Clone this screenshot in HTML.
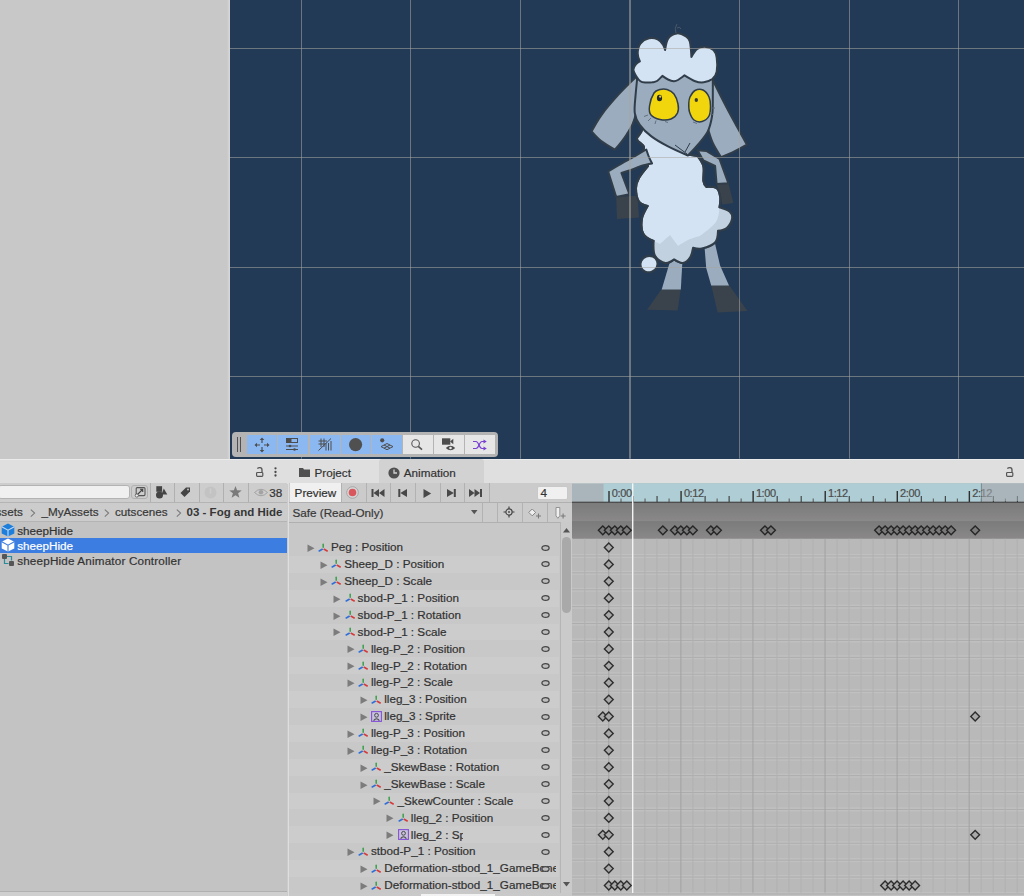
<!DOCTYPE html>
<html><head><meta charset="utf-8"><style>
html,body{margin:0;padding:0;}
body{width:1024px;height:896px;overflow:hidden;position:relative;font-family:"Liberation Sans", sans-serif;background:#cbcbcb;}
div{box-sizing:border-box;}
</style></head><body>
<div style="position:absolute;left:0px;top:0px;width:230px;height:459px;background:#c8c8c8;"></div><div style="position:absolute;left:227px;top:0px;width:3px;height:459px;background:linear-gradient(90deg,#c8c8c8,#dadada);"></div><div style="position:absolute;left:230px;top:0px;width:794px;height:458.7px;background:#223a56;"></div><svg style="position:absolute;left:0;top:0" width="1024" height="458"><path d="M661.7,288.9 L680.8,288.9 L677.6,310.5 L647.1,309.8Z" fill="#3a434c" /><path d="M671.9,255 L682.7,256 L680.8,289.5 L661.7,289.5Z" fill="#9aacbe" /><path d="M711.2,285.1 L729,285.1 L747.4,311.1 L717.6,312.4Z" fill="#3a434c" /><path d="M704.3,244 L714.4,241 L720.1,265.4 L729,285.6 L711.2,285.6 L706.2,268Z" fill="#9aacbe" /><path d="M636.5,76.6 C636.5,76.6 624.0,88.5 618.2,94.9 C612.4,101.3 606.0,108.7 601.6,114.8 C597.2,120.9 591.6,131.4 591.6,131.4 C591.6,131.4 597.7,138.4 601.6,141.4 C605.5,144.4 614.9,149.7 614.9,149.7 C614.9,149.7 623.2,140.0 626.5,134.7 C629.8,129.4 632.9,126.1 634.8,118.1 C636.7,110.1 638.1,86.6 638.1,86.6 C638.1,86.6 636.5,76.6 636.5,76.6Z" fill="#9aacbe" stroke="#313d49" stroke-width="2.0" stroke-linejoin="round" /><path d="M712.8,80.0 C712.8,80.0 720.2,95.2 724.4,103.2 C728.5,111.2 734.0,121.2 737.7,128.1 C741.5,135.0 746.9,144.7 746.9,144.7 C746.9,144.7 738.7,149.2 734.4,151.3 C730.1,153.4 721.1,157.2 721.1,157.2 C721.1,157.2 715.0,147.8 712.8,143.0 C710.6,138.2 707.8,128.1 707.8,128.1 C707.8,128.1 712.8,80.0 712.8,80.0Z" fill="#9aacbe" stroke="#313d49" stroke-width="2.0" stroke-linejoin="round" /><path d="M616.2,197.1 L637.5,195.7 L639,217.6 L617,219.1Z" fill="#3a434c" /><path d="M716.6,184 L728.3,182.5 L733.4,203 L722.4,204.5Z" fill="#3a434c" /><path d="M697.5,150.3 L706.3,151 L719.5,159 L728.3,183.2 L716.6,184 L715.1,166 L703.4,160.5Z" fill="#9aacbe" stroke="#313d49" stroke-width="2.0" stroke-linejoin="round" /><path d="M636.0,120.0 C636.0,120.0 641.8,126.8 642.0,130.0 C642.2,133.2 636.7,136.2 637.0,139.0 C637.3,141.8 643.5,144.3 644.0,147.0 C644.5,149.7 640.0,155.0 640.0,155.0 C640.0,155.0 648.0,166.0 648.0,166.0 C648.0,166.0 641.0,174.3 639.0,178.0 C637.0,181.7 636.0,184.4 636.0,188.3 C636.0,192.2 637.0,198.6 639.0,201.5 C641.0,204.4 647.7,206.0 647.7,206.0 C647.7,206.0 642.6,214.4 641.9,219.0 C641.2,223.6 641.3,230.0 643.3,233.7 C645.2,237.4 653.6,241.0 653.6,241.0 C653.6,241.0 653.0,252.0 655.0,255.7 C657.0,259.4 662.1,262.4 665.3,263.0 C668.5,263.6 674.1,259.4 674.1,259.4 C674.1,259.4 680.2,263.4 682.9,263.0 C685.6,262.6 688.5,259.8 690.2,257.2 C691.9,254.6 693.1,247.7 693.1,247.7 C693.1,247.7 698.3,249.3 702.0,248.4 C705.7,247.5 712.4,245.4 715.1,242.5 C717.8,239.6 718.0,230.8 718.0,230.8 C718.0,230.8 724.5,229.9 726.8,227.9 C729.1,225.9 731.5,221.7 732.0,219.0 C732.5,216.3 731.9,213.7 729.8,211.8 C727.7,209.9 719.5,207.4 719.5,207.4 C719.5,207.4 720.7,200.3 720.2,197.1 C719.7,193.9 718.9,190.0 716.6,188.3 C714.3,186.6 706.3,186.9 706.3,186.9 C706.3,186.9 703.9,184.4 703.4,181.0 C702.9,177.6 704.4,170.6 703.4,166.4 C702.4,162.2 697.5,156.1 697.5,156.1 C697.5,156.1 687.3,154.6 687.3,154.6 C687.3,154.6 660.0,135.0 660.0,135.0 C660.0,135.0 636.0,120.0 636.0,120.0Z" fill="#d3e3f3" stroke="#313d49" stroke-width="2.0" stroke-linejoin="round" /><path d="M653.6,241.0 C653.6,241.0 653.0,252.0 655.0,255.7 C657.0,259.4 662.1,262.4 665.3,263.0 C668.5,263.6 674.1,259.4 674.1,259.4 C674.1,259.4 680.2,263.4 682.9,263.0 C685.6,262.6 688.5,259.8 690.2,257.2 C691.9,254.6 693.1,247.7 693.1,247.7 C693.1,247.7 698.3,249.3 702.0,248.4 C705.7,247.5 712.4,245.4 715.1,242.5 C717.8,239.6 718.0,230.8 718.0,230.8 C718.0,230.8 724.5,229.9 726.8,227.9 C729.1,225.9 731.5,221.7 732.0,219.0 C732.5,216.3 731.9,213.7 729.8,211.8 C727.7,209.9 719.5,207.4 719.5,207.4 C719.5,207.4 719.2,217.2 716.0,222.0 C712.8,226.8 700.0,236.0 700.0,236.0 C700.0,236.0 691.7,238.3 688.0,240.0 C684.3,241.7 678.0,246.0 678.0,246.0 C678.0,246.0 670.0,235.0 670.0,235.0 C670.0,235.0 660.0,244.0 660.0,244.0 C660.0,244.0 653.6,241.0 653.6,241.0Z" fill="#bfcedd" opacity="0.9"/><path d="M636.0,120.0 C636.0,120.0 641.8,126.8 642.0,130.0 C642.2,133.2 636.7,136.2 637.0,139.0 C637.3,141.8 643.5,144.3 644.0,147.0 C644.5,149.7 640.0,155.0 640.0,155.0 C640.0,155.0 648.0,166.0 648.0,166.0 C648.0,166.0 641.0,174.3 639.0,178.0 C637.0,181.7 636.0,184.4 636.0,188.3 C636.0,192.2 637.0,198.6 639.0,201.5 C641.0,204.4 647.7,206.0 647.7,206.0 C647.7,206.0 642.6,214.4 641.9,219.0 C641.2,223.6 641.3,230.0 643.3,233.7 C645.2,237.4 653.6,241.0 653.6,241.0 C653.6,241.0 653.0,252.0 655.0,255.7 C657.0,259.4 662.1,262.4 665.3,263.0 C668.5,263.6 674.1,259.4 674.1,259.4 C674.1,259.4 680.2,263.4 682.9,263.0 C685.6,262.6 688.5,259.8 690.2,257.2 C691.9,254.6 693.1,247.7 693.1,247.7 C693.1,247.7 698.3,249.3 702.0,248.4 C705.7,247.5 712.4,245.4 715.1,242.5 C717.8,239.6 718.0,230.8 718.0,230.8 C718.0,230.8 724.5,229.9 726.8,227.9 C729.1,225.9 731.5,221.7 732.0,219.0 C732.5,216.3 731.9,213.7 729.8,211.8 C727.7,209.9 719.5,207.4 719.5,207.4 C719.5,207.4 720.7,200.3 720.2,197.1 C719.7,193.9 718.9,190.0 716.6,188.3 C714.3,186.6 706.3,186.9 706.3,186.9 C706.3,186.9 703.9,184.4 703.4,181.0 C702.9,177.6 704.4,170.6 703.4,166.4 C702.4,162.2 697.5,156.1 697.5,156.1 C697.5,156.1 687.3,154.6 687.3,154.6 C687.3,154.6 660.0,135.0 660.0,135.0 C660.0,135.0 636.0,120.0 636.0,120.0Z" fill="none" stroke="#313d49" stroke-width="2.0" stroke-linejoin="round" /><path d="M646.3,149.5 C646.3,149.5 648.2,155.3 649.2,157.6 C650.2,159.9 652.1,163.4 652.1,163.4 C652.1,163.4 645.1,164.6 641.9,165.6 C638.7,166.6 636.5,168.1 633.1,169.3 C629.7,170.5 621.4,173.0 621.4,173.0 C621.4,173.0 629.4,194.2 629.4,194.2 C629.4,194.2 616.2,197.1 616.2,197.1 C616.2,197.1 608.2,171.5 608.2,171.5 C608.2,171.5 619.4,164.8 624.3,162.0 C629.2,159.2 633.8,156.7 637.5,154.6 C641.2,152.5 646.3,149.5 646.3,149.5Z" fill="#9aacbe" stroke="#313d49" stroke-width="2.0" stroke-linejoin="round" /><ellipse cx="649" cy="264.1" rx="8.6" ry="8.1" fill="#d3e3f3" stroke="#313d49" stroke-width="2" transform="rotate(-20 649 264.1)"/><path d="M638.1,70.0 C638.1,70.0 636.2,87.7 635.6,94.9 C635.0,102.1 634.1,108.2 634.8,113.2 C635.5,118.2 637.0,120.9 639.8,124.8 C642.6,128.7 646.7,132.8 651.4,136.4 C656.1,140.0 661.9,143.2 668.0,146.4 C674.1,149.6 687.9,155.5 687.9,155.5 C687.9,155.5 694.6,148.7 697.9,144.7 C701.2,140.7 705.4,136.1 707.8,131.4 C710.1,126.7 711.2,121.2 712.0,116.5 C712.8,111.8 712.7,111.0 712.8,103.2 C712.9,95.5 712.8,70.0 712.8,70.0 C712.8,70.0 638.1,70.0 638.1,70.0Z" fill="#9aacbe" stroke="#313d49" stroke-width="2.0" stroke-linejoin="round" /><path d="M675,145 L687,154 M685,152 L690,143" fill="none" stroke="#313d49" stroke-width="1"/><path d="M636.1,75.9 C634.9,73.9 633.4,71.4 633.4,69.4 C633.4,67.4 635.0,65.3 636.1,64.0 C637.2,62.7 639.9,61.4 639.9,61.4 C639.9,61.4 637.6,56.3 637.7,53.3 C637.8,50.3 638.5,46.1 640.4,43.6 C642.3,41.1 646.1,39.0 649.0,38.3 C651.9,37.6 655.3,38.2 657.6,39.3 C659.9,40.4 661.8,42.9 663.0,44.7 C664.2,46.5 665.1,50.1 665.1,50.1 C665.1,50.1 666.3,41.1 668.3,38.3 C670.3,35.5 674.0,33.8 676.9,33.4 C679.8,33.0 683.4,34.8 685.5,36.1 C687.6,37.5 688.8,38.0 689.8,41.5 C690.8,45.0 691.4,57.0 691.4,57.0 C691.4,57.0 694.9,50.7 697.3,49.0 C699.7,47.3 703.2,46.7 705.9,46.9 C708.6,47.1 711.7,48.3 713.5,50.1 C715.3,51.9 716.2,54.0 716.7,57.6 C717.2,61.2 717.4,68.0 716.7,71.6 C716.0,75.2 714.5,77.3 712.4,79.1 C710.2,80.9 706.7,81.9 703.8,82.3 C700.9,82.7 698.4,82.4 695.2,81.2 C692.0,80.0 684.5,75.3 684.5,75.3 C684.5,75.3 679.8,79.0 678.0,80.0 C676.2,81.0 675.4,81.3 673.7,81.2 C672.0,81.1 669.9,80.4 668.0,79.5 C666.1,78.6 662.4,75.9 662.4,75.9 C662.4,75.9 658.7,79.9 657.0,81.0 C655.3,82.1 654.0,82.0 652.2,82.3 C650.4,82.5 648.0,82.7 646.0,82.5 C644.0,82.3 642.0,82.3 640.4,81.2 C638.8,80.1 637.3,77.9 636.1,75.9Z" fill="#d3e3f3" stroke="#313d49" stroke-width="2.0" stroke-linejoin="round" /><path d="M676,33 Q674,28 677,24 M677,28 Q680,26 681,29" fill="none" stroke="#56616c" stroke-width="0.8"/><path d="M654.0,93.0 C655.8,90.2 657.8,90.1 660.0,89.5 C662.2,88.9 664.7,88.8 667.0,89.5 C669.3,90.2 672.2,91.6 674.0,94.0 C675.8,96.4 677.4,100.8 678.0,104.0 C678.6,107.2 678.7,110.5 677.5,113.0 C676.3,115.5 673.9,117.9 671.0,119.0 C668.1,120.1 663.3,120.2 660.0,119.5 C656.7,118.8 652.8,117.2 651.0,115.0 C649.2,112.8 649.0,109.7 649.5,106.0 C650.0,102.3 652.2,95.8 654.0,93.0Z" fill="#f1d60d" stroke="#313d49" stroke-width="1.5" stroke-linejoin="round" /><path d="M690.0,97.0 C691.0,94.9 692.8,91.7 695.0,90.5 C697.2,89.3 700.7,88.9 703.0,90.0 C705.3,91.1 707.8,94.3 709.0,97.0 C710.2,99.7 710.5,102.8 710.5,106.0 C710.5,109.2 710.4,113.4 709.0,116.0 C707.6,118.6 704.5,120.8 702.0,121.5 C699.5,122.2 696.1,121.6 694.0,120.0 C691.9,118.4 690.4,114.8 689.5,112.0 C688.6,109.2 688.7,105.5 688.8,103.0 C688.9,100.5 689.0,99.1 690.0,97.0Z" fill="#f1d60d" stroke="#313d49" stroke-width="1.5" stroke-linejoin="round" /><ellipse cx="659.5" cy="98" rx="2.6" ry="3.3" fill="#20262c"/><ellipse cx="660.2" cy="96.6" rx="1.1" ry="1.2" fill="#f1d60d"/><ellipse cx="696.3" cy="100" rx="1.7" ry="2" fill="#3a3a30"/><path d="M648,115 L644,116.5 M651,118 L648,121 M656,120.5 L655,124 M665,121.5 L668,122.5 M693,122 L697,123.5 M710,112 L713,115 M711,108 L715,108" stroke="#5d6a78" stroke-width="0.9"/></svg><svg style="position:absolute;left:0;top:0" width="1024" height="459"><rect x="301" y="0" width="1" height="458.7" fill="rgba(170,168,160,0.55)"/><rect x="410" y="0" width="1" height="458.7" fill="rgba(170,168,160,0.55)"/><rect x="520" y="0" width="1" height="458.7" fill="rgba(170,168,160,0.55)"/><rect x="739" y="0" width="1" height="458.7" fill="rgba(170,168,160,0.55)"/><rect x="849" y="0" width="1" height="458.7" fill="rgba(170,168,160,0.55)"/><rect x="958" y="0" width="1" height="458.7" fill="rgba(170,168,160,0.55)"/><rect x="629" y="0" width="2" height="458.7" fill="rgba(170,168,160,0.55)"/><rect x="230" y="48" width="794" height="1" fill="rgba(170,168,160,0.55)"/><rect x="230" y="157" width="794" height="1" fill="rgba(170,168,160,0.55)"/><rect x="230" y="267" width="794" height="1" fill="rgba(170,168,160,0.55)"/><rect x="230" y="376" width="794" height="1" fill="rgba(170,168,160,0.55)"/></svg><div style="position:absolute;left:232px;top:432px;width:266px;height:24.5px;background:#b4b4b4;border-radius:4px;"></div><div style="position:absolute;left:237px;top:437px;width:1px;height:15px;background:#505050;"></div><div style="position:absolute;left:240px;top:437px;width:1px;height:15px;background:#505050;"></div><div style="position:absolute;left:247px;top:435px;width:30px;height:19px;background:#8cb8f2;"></div><div style="position:absolute;left:278px;top:435px;width:30px;height:19px;background:#8cb8f2;"></div><div style="position:absolute;left:310px;top:435px;width:30px;height:19px;background:#8cb8f2;"></div><div style="position:absolute;left:341px;top:435px;width:30px;height:19px;background:#8cb8f2;"></div><div style="position:absolute;left:372px;top:435px;width:30px;height:19px;background:#8cb8f2;"></div><div style="position:absolute;left:403px;top:435px;width:30px;height:19px;background:#e6e6e6;"></div><div style="position:absolute;left:434px;top:435px;width:30px;height:19px;background:#e6e6e6;"></div><div style="position:absolute;left:465px;top:435px;width:30px;height:19px;background:#e6e6e6;"></div><!--TBICONS--><div style="position:absolute;left:0px;top:458.7px;width:1024px;height:25.3px;background:#dfdfdf;"></div><div style="position:absolute;left:0px;top:458.7px;width:1024px;height:1.3px;background:#ebebeb;"></div><div style="position:absolute;left:379px;top:459px;width:105px;height:25px;background:#d2d2d2;border-radius:3px 3px 0 0;"></div><div style="position:absolute;left:0px;top:484px;width:287px;height:412px;background:#c3c3c3;"></div><div style="position:absolute;left:0px;top:482.5px;width:287px;height:19.5px;background:#cdcdcd;"></div><div style="position:absolute;left:0px;top:502px;width:287px;height:20px;background:#cccccc;"></div><div style="position:absolute;left:0px;top:521px;width:287px;height:1px;background:#b4b4b4;"></div><div style="position:absolute;left:0px;top:537.5px;width:287px;height:15px;background:#3b7de0;"></div><div style="position:absolute;left:-2px;top:485.4px;width:132px;height:13.6px;background:#f0f0f0;border:1px solid #b3b3b3;box-sizing:border-box;border-radius:3px;"></div><div style="position:absolute;left:130.5px;top:485.4px;width:17px;height:13.6px;background:#cdcdcd;border:1px solid #b0b0b0;box-sizing:border-box;border-radius:3px;"></div><div style="position:absolute;left:150px;top:482.5px;width:1px;height:19.5px;background:#b0b0b0;"></div><div style="position:absolute;left:174px;top:482.5px;width:1px;height:19.5px;background:#b0b0b0;"></div><div style="position:absolute;left:199px;top:482.5px;width:1px;height:19.5px;background:#b0b0b0;"></div><div style="position:absolute;left:223px;top:482.5px;width:1px;height:19.5px;background:#b0b0b0;"></div><div style="position:absolute;left:248px;top:482.5px;width:1px;height:19.5px;background:#b0b0b0;"></div><div style="position:absolute;left:0px;top:501.9px;width:287px;height:1px;background:#b4b4b4;"></div><div style="position:absolute;left:287.6px;top:484px;width:1.8px;height:412px;background:#dedede;"></div><div style="position:absolute;left:0px;top:891px;width:287px;height:1px;background:#b0b0b0;"></div><div style="position:absolute;left:0px;top:892px;width:287px;height:4px;background:#cfcfcf;"></div><div style="position:absolute;left:289px;top:484px;width:735px;height:412px;background:#c9c9c9;"></div><div style="position:absolute;left:289px;top:483px;width:283px;height:19px;background:#cbcbcb;"></div><div style="position:absolute;left:289.5px;top:483px;width:51.5px;height:19px;background:#f0f0f0;"></div><div style="position:absolute;left:341px;top:483px;width:1px;height:19px;background:#b2b2b2;"></div><div style="position:absolute;left:366px;top:483px;width:1px;height:19px;background:#b2b2b2;"></div><div style="position:absolute;left:390px;top:483px;width:1px;height:19px;background:#b2b2b2;"></div><div style="position:absolute;left:415px;top:483px;width:1px;height:19px;background:#b2b2b2;"></div><div style="position:absolute;left:440px;top:483px;width:1px;height:19px;background:#b2b2b2;"></div><div style="position:absolute;left:464px;top:483px;width:1px;height:19px;background:#b2b2b2;"></div><div style="position:absolute;left:489px;top:483px;width:1px;height:19px;background:#b2b2b2;"></div><div style="position:absolute;left:537px;top:486px;width:31px;height:14px;background:#f0f0f0;border-radius:2px;border:1px solid #c8c8c8;box-sizing:border-box;"></div><div style="position:absolute;left:289px;top:502px;width:283px;height:20px;background:#cbcbcb;"></div><div style="position:absolute;left:481.7px;top:502px;width:1px;height:20px;background:#b2b2b2;"></div><div style="position:absolute;left:497.4px;top:502px;width:1px;height:20px;background:#b2b2b2;"></div><div style="position:absolute;left:522.4px;top:502px;width:1px;height:20px;background:#b2b2b2;"></div><div style="position:absolute;left:546.6px;top:502px;width:1px;height:20px;background:#b2b2b2;"></div><div style="position:absolute;left:289px;top:522px;width:272px;height:371px;background:#c8c8c8;"></div><div style="position:absolute;left:561px;top:522px;width:11px;height:371px;background:#c4c4c4;"></div><div style="position:absolute;left:289px;top:501.6px;width:283px;height:1.2px;background:#b0b0b0;"></div><div style="position:absolute;left:289px;top:521.5px;width:283px;height:1.2px;background:#b0b0b0;"></div><div style="position:absolute;left:572px;top:484px;width:452px;height:18px;background:#a9b5ba;"></div><div style="position:absolute;left:604px;top:484px;width:377px;height:18px;background:#b0d3db;"></div><div style="position:absolute;left:572px;top:501px;width:452px;height:1px;background:#3a3a3a;"></div><div style="position:absolute;left:572px;top:502px;width:452px;height:20px;background:#848484;"></div><div style="position:absolute;left:572px;top:522px;width:452px;height:17px;background:#7d7d7d;"></div><div style="position:absolute;left:572px;top:539px;width:452px;height:354px;background:#bababa;"></div><!--TIMELINE--><div style="position:absolute;left:421px;top:893.5px;width:74px;height:2.5px;background:#f2f2f2;"></div><svg style="position:absolute;left:254px;top:437px;overflow:visible" width="16" height="16" viewBox="0 0 16 16"><g fill="none" stroke="#4d4d4d" stroke-width="1.2"><path d="M8,2 V6 M8,10 V14 M2,8 H6 M10,8 H14"/></g><g fill="#4d4d4d"><path d="M8,0.5 L10.3,3 H5.7Z M8,15.5 L10.3,13 H5.7Z M0.5,8 L3,5.7 V10.3Z M15.5,8 L13,5.7 V10.3Z"/></g></svg><svg style="position:absolute;left:286px;top:438px;overflow:visible" width="14" height="13" viewBox="0 0 14 13"><rect x="0.5" y="0.5" width="11" height="4" fill="none" stroke="#4d4d4d" stroke-width="1"/><rect x="0.5" y="0.5" width="5" height="4" fill="#4d4d4d"/><path d="M0,8 H12 M0,11.5 H12" stroke="#4d4d4d" stroke-width="1"/><circle cx="4" cy="8" r="1.3" fill="#4d4d4d"/><circle cx="8.5" cy="11.5" r="1.3" fill="#4d4d4d"/></svg><svg style="position:absolute;left:317.5px;top:438px;overflow:visible" width="14" height="13" viewBox="0 0 14 13"><g stroke="#4d4d4d" stroke-width="1"><path d="M0.5,3 H9 M0.5,6 H9 M3,0.5 V9 M6,0.5 V9"/><path d="M0.5,12.5 L13,0.5"/><path d="M8,7 V12.5 M10.5,5 V12.5 M13,3 V12.5"/></g></svg><svg style="position:absolute;left:348.9px;top:437.9px;overflow:visible" width="13.2" height="13.2" viewBox="0 0 13.2 13.2"><circle cx="6.6" cy="6.6" r="6.6" fill="#505050"/></svg><svg style="position:absolute;left:380px;top:438px;overflow:visible" width="14" height="12" viewBox="0 0 14 12"><circle cx="2.2" cy="2.3" r="2.1" fill="#4d4d4d"/><path d="M7,5.5 L13,8.6 L7,11.7 L1,8.6Z M4,7 L10,10.2 M10,7 L4,10.2" fill="none" stroke="#4d4d4d" stroke-width="1"/></svg><svg style="position:absolute;left:411px;top:439px;overflow:visible" width="13" height="12" viewBox="0 0 13 12"><circle cx="4.6" cy="4.5" r="3.8" fill="none" stroke="#555" stroke-width="1.1"/><path d="M7.3,7.3 L11,10.6" stroke="#555" stroke-width="1.6"/></svg><svg style="position:absolute;left:442px;top:438px;overflow:visible" width="14" height="13" viewBox="0 0 14 13"><rect x="0" y="0.3" width="8.3" height="6.4" fill="#4d4d4d"/><path d="M8,3.5 L11.3,0.8 V6.2Z" fill="#4d4d4d"/><path d="M3.8,10 Q8.5,5.5 13.2,10 Q8.5,14.5 3.8,10Z" fill="#4d4d4d"/><circle cx="8.5" cy="10" r="1.3" fill="#e6e6e6"/></svg><svg style="position:absolute;left:472.5px;top:440px;overflow:visible" width="14" height="10" viewBox="0 0 14 10"><g fill="none" stroke="#7a40d2" stroke-width="1.2"><path d="M0,1.5 H3 C6,1.5 6,8.5 9,8.5 H11.5"/><path d="M0,8.5 H3 C6,8.5 6,1.5 9,1.5 H11.5"/></g><path d="M10.5,-0.5 L13.8,1.5 L10.5,3.5Z M10.5,6.5 L13.8,8.5 L10.5,10.5Z" fill="#7a40d2"/></svg><svg style="position:absolute;left:256px;top:467px;overflow:visible" width="9" height="11" viewBox="0 0 9 11"><path d="M1.3,1.6 Q2.5,0.6 4,0.7 Q6,0.8 6,3 V5" fill="none" stroke="#555" stroke-width="1.3"/><rect x="0.6" y="5.5" width="6.2" height="3.9" rx="0.8" fill="none" stroke="#555" stroke-width="1.2"/></svg><svg style="position:absolute;left:274px;top:467px;overflow:visible" width="4" height="12" viewBox="0 0 4 12"><circle cx="1.5" cy="1.3" r="1.15" fill="#4a4a4a"/><circle cx="1.5" cy="5" r="1.15" fill="#4a4a4a"/><circle cx="1.5" cy="8.5" r="1.15" fill="#4a4a4a"/></svg><svg style="position:absolute;left:299px;top:468px;overflow:visible" width="11" height="9" viewBox="0 0 11 9"><path d="M0,0 H4 L5,1.5 H11 V9 H0Z" fill="#505050"/></svg><div style="position:absolute;left:314.5px;top:466.00px;font-size:11.7px;line-height:13px;color:#323232;font-weight:normal;white-space:nowrap;-webkit-text-stroke:0.2px #323232;">Project</div><svg style="position:absolute;left:388px;top:467px;overflow:visible" width="12" height="12" viewBox="0 0 12 12"><circle cx="6" cy="6" r="5.6" fill="#505050"/><path d="M6,2.5 V6 H9" fill="none" stroke="#d2d2d2" stroke-width="1.3"/></svg><div style="position:absolute;left:403.8px;top:466.00px;font-size:11.7px;line-height:13px;color:#323232;font-weight:normal;white-space:nowrap;-webkit-text-stroke:0.2px #323232;">Animation</div><svg style="position:absolute;left:1005.5px;top:467px;overflow:visible" width="9" height="11" viewBox="0 0 9 11"><path d="M1.3,1.6 Q2.5,0.6 4,0.7 Q6,0.8 6,3 V5" fill="none" stroke="#555" stroke-width="1.3"/><rect x="0.6" y="5.5" width="6.2" height="3.9" rx="0.8" fill="none" stroke="#555" stroke-width="1.2"/></svg><svg style="position:absolute;left:134.5px;top:486.8px;overflow:visible" width="11" height="10" viewBox="0 0 11 10"><rect x="1.2" y="0.6" width="8.8" height="8" rx="1" fill="none" stroke="#555" stroke-width="1.1"/><path d="M2.5,7.5 L7.5,2.5 M5,2.3 H7.7 V5" fill="none" stroke="#444" stroke-width="1.1"/><circle cx="1.8" cy="8.5" r="1.6" fill="#f2f2f2" stroke="#555" stroke-width="0.8"/></svg><svg style="position:absolute;left:156px;top:485.5px;overflow:visible" width="12" height="13" viewBox="0 0 12 13"><rect x="0.3" y="0.2" width="5.8" height="5.6" fill="#444"/><circle cx="3.5" cy="9" r="3.5" fill="#444"/><path d="M7.8,2.6 L11.3,8.6 H5.5Z" fill="#444"/></svg><svg style="position:absolute;left:180px;top:487px;overflow:visible" width="11" height="10" viewBox="0 0 11 10"><path d="M0.5,6 L6,0.5 H10 V4.5 L4.5,10Z" fill="#444"/><circle cx="8" cy="2.5" r="0.9" fill="#cbcbcb"/></svg><svg style="position:absolute;left:204px;top:486px;overflow:visible" width="13" height="13" viewBox="0 0 13 13"><circle cx="6.5" cy="6.5" r="6" fill="#c3c3c3"/><rect x="5.7" y="2.5" width="1.6" height="5" fill="#cdcdcd"/></svg><svg style="position:absolute;left:228.5px;top:486px;overflow:visible" width="13" height="12" viewBox="0 0 13 12"><path d="M6.5,0 L8.1,4.3 L12.7,4.5 L9.1,7.3 L10.4,11.8 L6.5,9.2 L2.6,11.8 L3.9,7.3 L0.3,4.5 L4.9,4.3Z" fill="#7a7a7a"/></svg><svg style="position:absolute;left:253.5px;top:487.5px;overflow:visible" width="14" height="9" viewBox="0 0 14 9"><path d="M0.5,4.5 Q7,-2 13.5,4.5 Q7,11 0.5,4.5Z" fill="none" stroke="#a3a3a3" stroke-width="1"/><circle cx="7" cy="4.2" r="2.3" fill="#a3a3a3"/></svg><div style="position:absolute;left:269.2px;top:486.40px;font-size:11.7px;line-height:13px;color:#323232;font-weight:normal;white-space:nowrap;-webkit-text-stroke:0.2px #323232;">38</div><div style="position:absolute;left:-4.5px;top:505.40px;font-size:11.7px;line-height:13px;color:#383838;font-weight:normal;white-space:nowrap;-webkit-text-stroke:0.2px #383838;">ssets</div><svg style="position:absolute;left:30.2px;top:508.5px;overflow:visible" width="6" height="9" viewBox="0 0 6 9"><path d="M0.8,0.6 L4.6,4.1 L0.8,7.6" fill="none" stroke="#7a7a7a" stroke-width="1.1"/></svg><div style="position:absolute;left:41.4px;top:505.40px;font-size:11.7px;line-height:13px;color:#383838;font-weight:normal;white-space:nowrap;-webkit-text-stroke:0.2px #383838;">_MyAssets</div><svg style="position:absolute;left:104px;top:508.5px;overflow:visible" width="6" height="9" viewBox="0 0 6 9"><path d="M0.8,0.6 L4.6,4.1 L0.8,7.6" fill="none" stroke="#7a7a7a" stroke-width="1.1"/></svg><div style="position:absolute;left:115px;top:505.40px;font-size:11.7px;line-height:13px;color:#383838;font-weight:normal;white-space:nowrap;-webkit-text-stroke:0.2px #383838;">cutscenes</div><svg style="position:absolute;left:175.6px;top:508.5px;overflow:visible" width="6" height="9" viewBox="0 0 6 9"><path d="M0.8,0.6 L4.6,4.1 L0.8,7.6" fill="none" stroke="#7a7a7a" stroke-width="1.1"/></svg><div style="position:absolute;left:186.6px;top:505.58px;font-size:11.5px;line-height:13px;color:#363636;font-weight:bold;white-space:nowrap;-webkit-text-stroke:0px #363636;">03 - Fog and Hide</div><svg style="position:absolute;left:0.5px;top:522.5px;overflow:visible" width="14" height="14" viewBox="0 0 14 14"><path d="M7,0.5 L13.3,3.8 V10.4 L7,13.6 L0.7,10.4 V3.8Z" fill="#1d7fdb"/><path d="M0.7,3.8 L7,7.2 L13.3,3.8 M7,7.2 V13.6" fill="none" stroke="#c9d9ec" stroke-width="1.1"/></svg><div style="position:absolute;left:17.2px;top:523.90px;font-size:11.7px;line-height:13px;color:#323232;font-weight:normal;white-space:nowrap;-webkit-text-stroke:0.2px #323232;">sheepHide</div><svg style="position:absolute;left:0.5px;top:538px;overflow:visible" width="14" height="14" viewBox="0 0 14 14"><path d="M7,0.5 L13.3,3.8 V10.4 L7,13.6 L0.7,10.4 V3.8Z" fill="#ffffff"/><path d="M0.7,3.8 L7,7.2 L13.3,3.8 M7,7.2 V13.6" fill="none" stroke="#3b7de0" stroke-width="1.1"/></svg><div style="position:absolute;left:17.2px;top:538.90px;font-size:11.7px;line-height:13px;color:#ffffff;font-weight:normal;white-space:nowrap;-webkit-text-stroke:0.2px #ffffff;">sheepHide</div><svg style="position:absolute;left:2px;top:553.5px;overflow:visible" width="12" height="12" viewBox="0 0 12 12"><rect x="0" y="0" width="5" height="5" rx="1" fill="#555"/><rect x="7" y="7" width="5" height="5" rx="1" fill="#555"/><path d="M5,2.5 H9.5 V6.5 M2.5,5 V9.5 H6.5" fill="none" stroke="#2a8c9a" stroke-width="1.2"/></svg><div style="position:absolute;left:17.2px;top:554.20px;font-size:11.7px;line-height:13px;color:#323232;font-weight:normal;white-space:nowrap;-webkit-text-stroke:0.2px #323232;letter-spacing:0.17px;">sheepHide Animator Controller</div><div style="position:absolute;left:294.6px;top:486.40px;font-size:11.7px;line-height:13px;color:#323232;font-weight:normal;white-space:nowrap;-webkit-text-stroke:0.2px #323232;">Preview</div><svg style="position:absolute;left:345.5px;top:486px;overflow:visible" width="13" height="13" viewBox="0 0 13 13"><circle cx="6.5" cy="6.5" r="5.8" fill="#d6d6d6" stroke="#a6a6a6" stroke-width="1"/><circle cx="6.5" cy="6.5" r="3.8" fill="#d8575c"/></svg><svg style="position:absolute;left:371px;top:489px;overflow:visible" width="15" height="8" viewBox="0 0 15 8"><rect x="0.5" y="0" width="2" height="8" fill="#484848"/><path d="M2.5,4 L8,0 V8Z M8,4 L13.5,0 V8Z" fill="#484848"/></svg><svg style="position:absolute;left:398px;top:489px;overflow:visible" width="10" height="8" viewBox="0 0 10 8"><rect x="0.3" y="0" width="2" height="8" fill="#484848"/><path d="M2.3,4 L9,0 V8Z" fill="#484848"/></svg><svg style="position:absolute;left:423px;top:488.5px;overflow:visible" width="9" height="9" viewBox="0 0 9 9"><path d="M0.5,0 L8.2,4.5 L0.5,9Z" fill="#484848"/></svg><svg style="position:absolute;left:447px;top:489px;overflow:visible" width="10" height="8" viewBox="0 0 10 8"><path d="M0,0 L6.8,4 L0,8Z" fill="#484848"/><rect x="6.8" y="0" width="2" height="8" fill="#484848"/></svg><svg style="position:absolute;left:469px;top:489px;overflow:visible" width="14" height="8" viewBox="0 0 14 8"><path d="M0,0 L5.5,4 L0,8Z M5.5,0 L11,4 L5.5,8Z" fill="#484848"/><rect x="11" y="0" width="2" height="8" fill="#484848"/></svg><div style="position:absolute;left:540.5px;top:486.40px;font-size:11.7px;line-height:13px;color:#333;font-weight:normal;white-space:nowrap;-webkit-text-stroke:0.2px #333;">4</div><div style="position:absolute;left:292.5px;top:506.40px;font-size:11.7px;line-height:13px;color:#383838;font-weight:normal;white-space:nowrap;-webkit-text-stroke:0.2px #383838;">Safe (Read-Only)</div><svg style="position:absolute;left:471px;top:510.3px;overflow:visible" width="7" height="5" viewBox="0 0 7 5"><path d="M0,0 H6.5 L3.25,4.2Z" fill="#555"/></svg><svg style="position:absolute;left:503.2px;top:506px;overflow:visible" width="12" height="12" viewBox="0 0 12 12"><circle cx="6" cy="6" r="3.1" fill="none" stroke="#454545" stroke-width="1.2"/><circle cx="6" cy="6" r="0.9" fill="#454545"/><path d="M6,0.5 V2.9 M6,9.1 V11.5 M0.5,6 H2.9 M9.1,6 H11.5" stroke="#454545" stroke-width="1.2"/></svg><svg style="position:absolute;left:527.5px;top:507.5px;overflow:visible" width="14" height="11" viewBox="0 0 14 11"><path d="M4.2,1 L7.6,4.4 L4.2,7.8 L0.8,4.4Z" fill="#efefef" stroke="#7a7a7a" stroke-width="0.9"/><path d="M8,8 H13 M10.5,5.5 V10.5" stroke="#7a7a7a" stroke-width="1.1"/></svg><svg style="position:absolute;left:554.5px;top:506.5px;overflow:visible" width="14" height="13" viewBox="0 0 14 13"><path d="M1,0.5 H4.8 V8.8 L2.9,11.3 L1,8.8Z" fill="#efefef" stroke="#8a8a8a" stroke-width="0.9"/><path d="M5.6,9 H10.6 M8.1,6.5 V11.5" stroke="#7a7a7a" stroke-width="1.1"/></svg><svg style="position:absolute;left:306.6px;top:543.9px;overflow:visible" width="9" height="9" viewBox="0 0 9 9"><path d="M0.5,0.5 L7.5,4.3 L0.5,8.1Z" fill="#7c7c7c"/></svg><svg style="position:absolute;left:317.9px;top:542.5px;overflow:visible" width="11" height="10" viewBox="0 0 11 10"><path d="M5.2,4.2 V1.2" stroke="#3aa04a" stroke-width="1.5" stroke-linecap="round"/><path d="M4.2,6.3 L1.2,7.9" stroke="#2f6fd8" stroke-width="1.7" stroke-linecap="round"/><path d="M6.2,6.3 L9.2,7.9" stroke="#d63a3a" stroke-width="1.7" stroke-linecap="round"/></svg><div style="position:absolute;left:331.0px;top:540.20px;font-size:11.7px;line-height:13px;color:#323232;font-weight:normal;white-space:nowrap;-webkit-text-stroke:0.2px #323232;">Peg : Position</div><svg style="position:absolute;left:540.5px;top:544.5px;overflow:visible" width="9" height="6" viewBox="0 0 9 6"><ellipse cx="4.5" cy="3" rx="3.6" ry="2.4" fill="#bdbdbd" stroke="#474747" stroke-width="1.3"/></svg><div style="position:absolute;left:289px;top:555.95px;width:270px;height:16.9px;background:#cccccc"></div><svg style="position:absolute;left:319.9px;top:560.8px;overflow:visible" width="9" height="9" viewBox="0 0 9 9"><path d="M0.5,0.5 L7.5,4.3 L0.5,8.1Z" fill="#7c7c7c"/></svg><svg style="position:absolute;left:331.2px;top:559.4px;overflow:visible" width="11" height="10" viewBox="0 0 11 10"><path d="M5.2,4.2 V1.2" stroke="#3aa04a" stroke-width="1.5" stroke-linecap="round"/><path d="M4.2,6.3 L1.2,7.9" stroke="#2f6fd8" stroke-width="1.7" stroke-linecap="round"/><path d="M6.2,6.3 L9.2,7.9" stroke="#d63a3a" stroke-width="1.7" stroke-linecap="round"/></svg><div style="position:absolute;left:344.3px;top:557.10px;font-size:11.7px;line-height:13px;color:#323232;font-weight:normal;white-space:nowrap;-webkit-text-stroke:0.2px #323232;">Sheep_D : Position</div><svg style="position:absolute;left:540.5px;top:561.4px;overflow:visible" width="9" height="6" viewBox="0 0 9 6"><ellipse cx="4.5" cy="3" rx="3.6" ry="2.4" fill="#bdbdbd" stroke="#474747" stroke-width="1.3"/></svg><svg style="position:absolute;left:319.9px;top:577.7px;overflow:visible" width="9" height="9" viewBox="0 0 9 9"><path d="M0.5,0.5 L7.5,4.3 L0.5,8.1Z" fill="#7c7c7c"/></svg><svg style="position:absolute;left:331.2px;top:576.3px;overflow:visible" width="11" height="10" viewBox="0 0 11 10"><path d="M5.2,4.2 V1.2" stroke="#3aa04a" stroke-width="1.5" stroke-linecap="round"/><path d="M4.2,6.3 L1.2,7.9" stroke="#2f6fd8" stroke-width="1.7" stroke-linecap="round"/><path d="M6.2,6.3 L9.2,7.9" stroke="#d63a3a" stroke-width="1.7" stroke-linecap="round"/></svg><div style="position:absolute;left:344.3px;top:574.00px;font-size:11.7px;line-height:13px;color:#323232;font-weight:normal;white-space:nowrap;-webkit-text-stroke:0.2px #323232;">Sheep_D : Scale</div><svg style="position:absolute;left:540.5px;top:578.3px;overflow:visible" width="9" height="6" viewBox="0 0 9 6"><ellipse cx="4.5" cy="3" rx="3.6" ry="2.4" fill="#bdbdbd" stroke="#474747" stroke-width="1.3"/></svg><div style="position:absolute;left:289px;top:589.75px;width:270px;height:16.9px;background:#cccccc"></div><svg style="position:absolute;left:333.2px;top:594.6px;overflow:visible" width="9" height="9" viewBox="0 0 9 9"><path d="M0.5,0.5 L7.5,4.3 L0.5,8.1Z" fill="#7c7c7c"/></svg><svg style="position:absolute;left:344.5px;top:593.2px;overflow:visible" width="11" height="10" viewBox="0 0 11 10"><path d="M5.2,4.2 V1.2" stroke="#3aa04a" stroke-width="1.5" stroke-linecap="round"/><path d="M4.2,6.3 L1.2,7.9" stroke="#2f6fd8" stroke-width="1.7" stroke-linecap="round"/><path d="M6.2,6.3 L9.2,7.9" stroke="#d63a3a" stroke-width="1.7" stroke-linecap="round"/></svg><div style="position:absolute;left:357.6px;top:590.90px;font-size:11.7px;line-height:13px;color:#323232;font-weight:normal;white-space:nowrap;-webkit-text-stroke:0.2px #323232;">sbod-P_1 : Position</div><svg style="position:absolute;left:540.5px;top:595.2px;overflow:visible" width="9" height="6" viewBox="0 0 9 6"><ellipse cx="4.5" cy="3" rx="3.6" ry="2.4" fill="#bdbdbd" stroke="#474747" stroke-width="1.3"/></svg><svg style="position:absolute;left:333.2px;top:611.5px;overflow:visible" width="9" height="9" viewBox="0 0 9 9"><path d="M0.5,0.5 L7.5,4.3 L0.5,8.1Z" fill="#7c7c7c"/></svg><svg style="position:absolute;left:344.5px;top:610.1px;overflow:visible" width="11" height="10" viewBox="0 0 11 10"><path d="M5.2,4.2 V1.2" stroke="#3aa04a" stroke-width="1.5" stroke-linecap="round"/><path d="M4.2,6.3 L1.2,7.9" stroke="#2f6fd8" stroke-width="1.7" stroke-linecap="round"/><path d="M6.2,6.3 L9.2,7.9" stroke="#d63a3a" stroke-width="1.7" stroke-linecap="round"/></svg><div style="position:absolute;left:357.6px;top:607.80px;font-size:11.7px;line-height:13px;color:#323232;font-weight:normal;white-space:nowrap;-webkit-text-stroke:0.2px #323232;">sbod-P_1 : Rotation</div><svg style="position:absolute;left:540.5px;top:612.1px;overflow:visible" width="9" height="6" viewBox="0 0 9 6"><ellipse cx="4.5" cy="3" rx="3.6" ry="2.4" fill="#bdbdbd" stroke="#474747" stroke-width="1.3"/></svg><div style="position:absolute;left:289px;top:623.55px;width:270px;height:16.9px;background:#cccccc"></div><svg style="position:absolute;left:333.2px;top:628.4px;overflow:visible" width="9" height="9" viewBox="0 0 9 9"><path d="M0.5,0.5 L7.5,4.3 L0.5,8.1Z" fill="#7c7c7c"/></svg><svg style="position:absolute;left:344.5px;top:627.0px;overflow:visible" width="11" height="10" viewBox="0 0 11 10"><path d="M5.2,4.2 V1.2" stroke="#3aa04a" stroke-width="1.5" stroke-linecap="round"/><path d="M4.2,6.3 L1.2,7.9" stroke="#2f6fd8" stroke-width="1.7" stroke-linecap="round"/><path d="M6.2,6.3 L9.2,7.9" stroke="#d63a3a" stroke-width="1.7" stroke-linecap="round"/></svg><div style="position:absolute;left:357.6px;top:624.70px;font-size:11.7px;line-height:13px;color:#323232;font-weight:normal;white-space:nowrap;-webkit-text-stroke:0.2px #323232;">sbod-P_1 : Scale</div><svg style="position:absolute;left:540.5px;top:629.0px;overflow:visible" width="9" height="6" viewBox="0 0 9 6"><ellipse cx="4.5" cy="3" rx="3.6" ry="2.4" fill="#bdbdbd" stroke="#474747" stroke-width="1.3"/></svg><svg style="position:absolute;left:346.5px;top:645.3px;overflow:visible" width="9" height="9" viewBox="0 0 9 9"><path d="M0.5,0.5 L7.5,4.3 L0.5,8.1Z" fill="#7c7c7c"/></svg><svg style="position:absolute;left:357.8px;top:643.9px;overflow:visible" width="11" height="10" viewBox="0 0 11 10"><path d="M5.2,4.2 V1.2" stroke="#3aa04a" stroke-width="1.5" stroke-linecap="round"/><path d="M4.2,6.3 L1.2,7.9" stroke="#2f6fd8" stroke-width="1.7" stroke-linecap="round"/><path d="M6.2,6.3 L9.2,7.9" stroke="#d63a3a" stroke-width="1.7" stroke-linecap="round"/></svg><div style="position:absolute;left:370.9px;top:641.60px;font-size:11.7px;line-height:13px;color:#323232;font-weight:normal;white-space:nowrap;-webkit-text-stroke:0.2px #323232;">lleg-P_2 : Position</div><svg style="position:absolute;left:540.5px;top:645.9px;overflow:visible" width="9" height="6" viewBox="0 0 9 6"><ellipse cx="4.5" cy="3" rx="3.6" ry="2.4" fill="#bdbdbd" stroke="#474747" stroke-width="1.3"/></svg><div style="position:absolute;left:289px;top:657.35px;width:270px;height:16.9px;background:#cccccc"></div><svg style="position:absolute;left:346.5px;top:662.2px;overflow:visible" width="9" height="9" viewBox="0 0 9 9"><path d="M0.5,0.5 L7.5,4.3 L0.5,8.1Z" fill="#7c7c7c"/></svg><svg style="position:absolute;left:357.8px;top:660.8px;overflow:visible" width="11" height="10" viewBox="0 0 11 10"><path d="M5.2,4.2 V1.2" stroke="#3aa04a" stroke-width="1.5" stroke-linecap="round"/><path d="M4.2,6.3 L1.2,7.9" stroke="#2f6fd8" stroke-width="1.7" stroke-linecap="round"/><path d="M6.2,6.3 L9.2,7.9" stroke="#d63a3a" stroke-width="1.7" stroke-linecap="round"/></svg><div style="position:absolute;left:370.9px;top:658.50px;font-size:11.7px;line-height:13px;color:#323232;font-weight:normal;white-space:nowrap;-webkit-text-stroke:0.2px #323232;">lleg-P_2 : Rotation</div><svg style="position:absolute;left:540.5px;top:662.8px;overflow:visible" width="9" height="6" viewBox="0 0 9 6"><ellipse cx="4.5" cy="3" rx="3.6" ry="2.4" fill="#bdbdbd" stroke="#474747" stroke-width="1.3"/></svg><svg style="position:absolute;left:346.5px;top:679.1px;overflow:visible" width="9" height="9" viewBox="0 0 9 9"><path d="M0.5,0.5 L7.5,4.3 L0.5,8.1Z" fill="#7c7c7c"/></svg><svg style="position:absolute;left:357.8px;top:677.7px;overflow:visible" width="11" height="10" viewBox="0 0 11 10"><path d="M5.2,4.2 V1.2" stroke="#3aa04a" stroke-width="1.5" stroke-linecap="round"/><path d="M4.2,6.3 L1.2,7.9" stroke="#2f6fd8" stroke-width="1.7" stroke-linecap="round"/><path d="M6.2,6.3 L9.2,7.9" stroke="#d63a3a" stroke-width="1.7" stroke-linecap="round"/></svg><div style="position:absolute;left:370.9px;top:675.40px;font-size:11.7px;line-height:13px;color:#323232;font-weight:normal;white-space:nowrap;-webkit-text-stroke:0.2px #323232;">lleg-P_2 : Scale</div><svg style="position:absolute;left:540.5px;top:679.7px;overflow:visible" width="9" height="6" viewBox="0 0 9 6"><ellipse cx="4.5" cy="3" rx="3.6" ry="2.4" fill="#bdbdbd" stroke="#474747" stroke-width="1.3"/></svg><div style="position:absolute;left:289px;top:691.15px;width:270px;height:16.9px;background:#cccccc"></div><svg style="position:absolute;left:359.8px;top:696.0px;overflow:visible" width="9" height="9" viewBox="0 0 9 9"><path d="M0.5,0.5 L7.5,4.3 L0.5,8.1Z" fill="#7c7c7c"/></svg><svg style="position:absolute;left:371.1px;top:694.6px;overflow:visible" width="11" height="10" viewBox="0 0 11 10"><path d="M5.2,4.2 V1.2" stroke="#3aa04a" stroke-width="1.5" stroke-linecap="round"/><path d="M4.2,6.3 L1.2,7.9" stroke="#2f6fd8" stroke-width="1.7" stroke-linecap="round"/><path d="M6.2,6.3 L9.2,7.9" stroke="#d63a3a" stroke-width="1.7" stroke-linecap="round"/></svg><div style="position:absolute;left:384.2px;top:692.30px;font-size:11.7px;line-height:13px;color:#323232;font-weight:normal;white-space:nowrap;-webkit-text-stroke:0.2px #323232;">lleg_3 : Position</div><svg style="position:absolute;left:540.5px;top:696.6px;overflow:visible" width="9" height="6" viewBox="0 0 9 6"><ellipse cx="4.5" cy="3" rx="3.6" ry="2.4" fill="#bdbdbd" stroke="#474747" stroke-width="1.3"/></svg><svg style="position:absolute;left:359.8px;top:712.9px;overflow:visible" width="9" height="9" viewBox="0 0 9 9"><path d="M0.5,0.5 L7.5,4.3 L0.5,8.1Z" fill="#7c7c7c"/></svg><svg style="position:absolute;left:371.1px;top:711.0px;overflow:visible" width="11" height="11" viewBox="0 0 11 11"><rect x="0.6" y="0.6" width="9.8" height="9.8" fill="#c9c2dc" stroke="#8452d6" stroke-width="1.1"/><circle cx="5.5" cy="4.3" r="1.9" fill="none" stroke="#4a4a4a" stroke-width="1"/><path d="M2.6,9.6 Q5.5,5.8 8.4,9.6" fill="none" stroke="#4a4a4a" stroke-width="1.1"/></svg><div style="position:absolute;left:384.2px;top:709.20px;font-size:11.7px;line-height:13px;color:#323232;font-weight:normal;white-space:nowrap;-webkit-text-stroke:0.2px #323232;">lleg_3 : Sprite</div><svg style="position:absolute;left:540.5px;top:713.5px;overflow:visible" width="9" height="6" viewBox="0 0 9 6"><ellipse cx="4.5" cy="3" rx="3.6" ry="2.4" fill="#bdbdbd" stroke="#474747" stroke-width="1.3"/></svg><div style="position:absolute;left:289px;top:724.95px;width:270px;height:16.9px;background:#cccccc"></div><svg style="position:absolute;left:346.5px;top:729.8px;overflow:visible" width="9" height="9" viewBox="0 0 9 9"><path d="M0.5,0.5 L7.5,4.3 L0.5,8.1Z" fill="#7c7c7c"/></svg><svg style="position:absolute;left:357.8px;top:728.4px;overflow:visible" width="11" height="10" viewBox="0 0 11 10"><path d="M5.2,4.2 V1.2" stroke="#3aa04a" stroke-width="1.5" stroke-linecap="round"/><path d="M4.2,6.3 L1.2,7.9" stroke="#2f6fd8" stroke-width="1.7" stroke-linecap="round"/><path d="M6.2,6.3 L9.2,7.9" stroke="#d63a3a" stroke-width="1.7" stroke-linecap="round"/></svg><div style="position:absolute;left:370.9px;top:726.10px;font-size:11.7px;line-height:13px;color:#323232;font-weight:normal;white-space:nowrap;-webkit-text-stroke:0.2px #323232;">lleg-P_3 : Position</div><svg style="position:absolute;left:540.5px;top:730.4px;overflow:visible" width="9" height="6" viewBox="0 0 9 6"><ellipse cx="4.5" cy="3" rx="3.6" ry="2.4" fill="#bdbdbd" stroke="#474747" stroke-width="1.3"/></svg><svg style="position:absolute;left:346.5px;top:746.7px;overflow:visible" width="9" height="9" viewBox="0 0 9 9"><path d="M0.5,0.5 L7.5,4.3 L0.5,8.1Z" fill="#7c7c7c"/></svg><svg style="position:absolute;left:357.8px;top:745.3px;overflow:visible" width="11" height="10" viewBox="0 0 11 10"><path d="M5.2,4.2 V1.2" stroke="#3aa04a" stroke-width="1.5" stroke-linecap="round"/><path d="M4.2,6.3 L1.2,7.9" stroke="#2f6fd8" stroke-width="1.7" stroke-linecap="round"/><path d="M6.2,6.3 L9.2,7.9" stroke="#d63a3a" stroke-width="1.7" stroke-linecap="round"/></svg><div style="position:absolute;left:370.9px;top:743.00px;font-size:11.7px;line-height:13px;color:#323232;font-weight:normal;white-space:nowrap;-webkit-text-stroke:0.2px #323232;">lleg-P_3 : Rotation</div><svg style="position:absolute;left:540.5px;top:747.3px;overflow:visible" width="9" height="6" viewBox="0 0 9 6"><ellipse cx="4.5" cy="3" rx="3.6" ry="2.4" fill="#bdbdbd" stroke="#474747" stroke-width="1.3"/></svg><div style="position:absolute;left:289px;top:758.75px;width:270px;height:16.9px;background:#cccccc"></div><svg style="position:absolute;left:359.8px;top:763.6px;overflow:visible" width="9" height="9" viewBox="0 0 9 9"><path d="M0.5,0.5 L7.5,4.3 L0.5,8.1Z" fill="#7c7c7c"/></svg><svg style="position:absolute;left:371.1px;top:762.2px;overflow:visible" width="11" height="10" viewBox="0 0 11 10"><path d="M5.2,4.2 V1.2" stroke="#3aa04a" stroke-width="1.5" stroke-linecap="round"/><path d="M4.2,6.3 L1.2,7.9" stroke="#2f6fd8" stroke-width="1.7" stroke-linecap="round"/><path d="M6.2,6.3 L9.2,7.9" stroke="#d63a3a" stroke-width="1.7" stroke-linecap="round"/></svg><div style="position:absolute;left:384.2px;top:759.90px;font-size:11.7px;line-height:13px;color:#323232;font-weight:normal;white-space:nowrap;-webkit-text-stroke:0.2px #323232;">_SkewBase : Rotation</div><svg style="position:absolute;left:540.5px;top:764.2px;overflow:visible" width="9" height="6" viewBox="0 0 9 6"><ellipse cx="4.5" cy="3" rx="3.6" ry="2.4" fill="#bdbdbd" stroke="#474747" stroke-width="1.3"/></svg><svg style="position:absolute;left:359.8px;top:780.5px;overflow:visible" width="9" height="9" viewBox="0 0 9 9"><path d="M0.5,0.5 L7.5,4.3 L0.5,8.1Z" fill="#7c7c7c"/></svg><svg style="position:absolute;left:371.1px;top:779.1px;overflow:visible" width="11" height="10" viewBox="0 0 11 10"><path d="M5.2,4.2 V1.2" stroke="#3aa04a" stroke-width="1.5" stroke-linecap="round"/><path d="M4.2,6.3 L1.2,7.9" stroke="#2f6fd8" stroke-width="1.7" stroke-linecap="round"/><path d="M6.2,6.3 L9.2,7.9" stroke="#d63a3a" stroke-width="1.7" stroke-linecap="round"/></svg><div style="position:absolute;left:384.2px;top:776.80px;font-size:11.7px;line-height:13px;color:#323232;font-weight:normal;white-space:nowrap;-webkit-text-stroke:0.2px #323232;">_SkewBase : Scale</div><svg style="position:absolute;left:540.5px;top:781.1px;overflow:visible" width="9" height="6" viewBox="0 0 9 6"><ellipse cx="4.5" cy="3" rx="3.6" ry="2.4" fill="#bdbdbd" stroke="#474747" stroke-width="1.3"/></svg><div style="position:absolute;left:289px;top:792.55px;width:270px;height:16.9px;background:#cccccc"></div><svg style="position:absolute;left:373.1px;top:797.4px;overflow:visible" width="9" height="9" viewBox="0 0 9 9"><path d="M0.5,0.5 L7.5,4.3 L0.5,8.1Z" fill="#7c7c7c"/></svg><svg style="position:absolute;left:384.4px;top:796.0px;overflow:visible" width="11" height="10" viewBox="0 0 11 10"><path d="M5.2,4.2 V1.2" stroke="#3aa04a" stroke-width="1.5" stroke-linecap="round"/><path d="M4.2,6.3 L1.2,7.9" stroke="#2f6fd8" stroke-width="1.7" stroke-linecap="round"/><path d="M6.2,6.3 L9.2,7.9" stroke="#d63a3a" stroke-width="1.7" stroke-linecap="round"/></svg><div style="position:absolute;left:397.5px;top:793.70px;font-size:11.7px;line-height:13px;color:#323232;font-weight:normal;white-space:nowrap;-webkit-text-stroke:0.2px #323232;">_SkewCounter : Scale</div><svg style="position:absolute;left:540.5px;top:798.0px;overflow:visible" width="9" height="6" viewBox="0 0 9 6"><ellipse cx="4.5" cy="3" rx="3.6" ry="2.4" fill="#bdbdbd" stroke="#474747" stroke-width="1.3"/></svg><svg style="position:absolute;left:386.4px;top:814.3px;overflow:visible" width="9" height="9" viewBox="0 0 9 9"><path d="M0.5,0.5 L7.5,4.3 L0.5,8.1Z" fill="#7c7c7c"/></svg><svg style="position:absolute;left:397.7px;top:812.9px;overflow:visible" width="11" height="10" viewBox="0 0 11 10"><path d="M5.2,4.2 V1.2" stroke="#3aa04a" stroke-width="1.5" stroke-linecap="round"/><path d="M4.2,6.3 L1.2,7.9" stroke="#2f6fd8" stroke-width="1.7" stroke-linecap="round"/><path d="M6.2,6.3 L9.2,7.9" stroke="#d63a3a" stroke-width="1.7" stroke-linecap="round"/></svg><div style="position:absolute;left:410.8px;top:810.60px;font-size:11.7px;line-height:13px;color:#323232;font-weight:normal;white-space:nowrap;-webkit-text-stroke:0.2px #323232;">lleg_2 : Position</div><svg style="position:absolute;left:540.5px;top:814.9px;overflow:visible" width="9" height="6" viewBox="0 0 9 6"><ellipse cx="4.5" cy="3" rx="3.6" ry="2.4" fill="#bdbdbd" stroke="#474747" stroke-width="1.3"/></svg><div style="position:absolute;left:289px;top:826.35px;width:270px;height:16.9px;background:#cccccc"></div><svg style="position:absolute;left:386.4px;top:831.2px;overflow:visible" width="9" height="9" viewBox="0 0 9 9"><path d="M0.5,0.5 L7.5,4.3 L0.5,8.1Z" fill="#7c7c7c"/></svg><svg style="position:absolute;left:397.7px;top:829.3px;overflow:visible" width="11" height="11" viewBox="0 0 11 11"><rect x="0.6" y="0.6" width="9.8" height="9.8" fill="#c9c2dc" stroke="#8452d6" stroke-width="1.1"/><circle cx="5.5" cy="4.3" r="1.9" fill="none" stroke="#4a4a4a" stroke-width="1"/><path d="M2.6,9.6 Q5.5,5.8 8.4,9.6" fill="none" stroke="#4a4a4a" stroke-width="1.1"/></svg><div style="position:absolute;left:410.8px;top:827.50px;font-size:11.7px;line-height:13px;color:#323232;font-weight:normal;white-space:nowrap;-webkit-text-stroke:0.2px #323232;width:52.2px;overflow:hidden;">lleg_2 : Sprite</div><svg style="position:absolute;left:540.5px;top:831.8px;overflow:visible" width="9" height="6" viewBox="0 0 9 6"><ellipse cx="4.5" cy="3" rx="3.6" ry="2.4" fill="#bdbdbd" stroke="#474747" stroke-width="1.3"/></svg><svg style="position:absolute;left:346.5px;top:848.1px;overflow:visible" width="9" height="9" viewBox="0 0 9 9"><path d="M0.5,0.5 L7.5,4.3 L0.5,8.1Z" fill="#7c7c7c"/></svg><svg style="position:absolute;left:357.8px;top:846.7px;overflow:visible" width="11" height="10" viewBox="0 0 11 10"><path d="M5.2,4.2 V1.2" stroke="#3aa04a" stroke-width="1.5" stroke-linecap="round"/><path d="M4.2,6.3 L1.2,7.9" stroke="#2f6fd8" stroke-width="1.7" stroke-linecap="round"/><path d="M6.2,6.3 L9.2,7.9" stroke="#d63a3a" stroke-width="1.7" stroke-linecap="round"/></svg><div style="position:absolute;left:370.9px;top:844.40px;font-size:11.7px;line-height:13px;color:#323232;font-weight:normal;white-space:nowrap;-webkit-text-stroke:0.2px #323232;">stbod-P_1 : Position</div><svg style="position:absolute;left:540.5px;top:848.7px;overflow:visible" width="9" height="6" viewBox="0 0 9 6"><ellipse cx="4.5" cy="3" rx="3.6" ry="2.4" fill="#bdbdbd" stroke="#474747" stroke-width="1.3"/></svg><div style="position:absolute;left:289px;top:860.15px;width:270px;height:16.9px;background:#cccccc"></div><svg style="position:absolute;left:359.8px;top:865.0px;overflow:visible" width="9" height="9" viewBox="0 0 9 9"><path d="M0.5,0.5 L7.5,4.3 L0.5,8.1Z" fill="#7c7c7c"/></svg><svg style="position:absolute;left:371.1px;top:863.6px;overflow:visible" width="11" height="10" viewBox="0 0 11 10"><path d="M5.2,4.2 V1.2" stroke="#3aa04a" stroke-width="1.5" stroke-linecap="round"/><path d="M4.2,6.3 L1.2,7.9" stroke="#2f6fd8" stroke-width="1.7" stroke-linecap="round"/><path d="M6.2,6.3 L9.2,7.9" stroke="#d63a3a" stroke-width="1.7" stroke-linecap="round"/></svg><div style="position:absolute;left:384.2px;top:861.30px;font-size:11.7px;line-height:13px;color:#323232;font-weight:normal;white-space:nowrap;-webkit-text-stroke:0.2px #323232;width:172px;overflow:hidden;">Deformation-stbod_1_GameBone</div><svg style="position:absolute;left:540.5px;top:865.6px;overflow:visible" width="9" height="6" viewBox="0 0 9 6"><ellipse cx="4.5" cy="3" rx="3.6" ry="2.4" fill="#bdbdbd" stroke="#474747" stroke-width="1.3"/></svg><svg style="position:absolute;left:359.8px;top:881.9px;overflow:visible" width="9" height="9" viewBox="0 0 9 9"><path d="M0.5,0.5 L7.5,4.3 L0.5,8.1Z" fill="#7c7c7c"/></svg><svg style="position:absolute;left:371.1px;top:880.5px;overflow:visible" width="11" height="10" viewBox="0 0 11 10"><path d="M5.2,4.2 V1.2" stroke="#3aa04a" stroke-width="1.5" stroke-linecap="round"/><path d="M4.2,6.3 L1.2,7.9" stroke="#2f6fd8" stroke-width="1.7" stroke-linecap="round"/><path d="M6.2,6.3 L9.2,7.9" stroke="#d63a3a" stroke-width="1.7" stroke-linecap="round"/></svg><div style="position:absolute;left:384.2px;top:878.20px;font-size:11.7px;line-height:13px;color:#323232;font-weight:normal;white-space:nowrap;-webkit-text-stroke:0.2px #323232;width:172px;overflow:hidden;">Deformation-stbod_1_GameBone</div><svg style="position:absolute;left:540.5px;top:882.5px;overflow:visible" width="9" height="6" viewBox="0 0 9 6"><ellipse cx="4.5" cy="3" rx="3.6" ry="2.4" fill="#bdbdbd" stroke="#474747" stroke-width="1.3"/></svg><div style="position:absolute;left:559.5px;top:522px;width:13px;height:371px;background:#cacaca;border-left:1px solid #b5b5b5"></div><svg style="position:absolute;left:562.5px;top:527.5px;overflow:visible" width="7" height="5" viewBox="0 0 7 5"><path d="M0,4.5 L3.5,0 L7,4.5Z" fill="#555"/></svg><div style="position:absolute;left:561.8px;top:537px;width:9px;height:76px;background:#a9a9a9;border-radius:4.5px"></div><svg style="position:absolute;left:562.5px;top:882px;overflow:visible" width="7" height="5" viewBox="0 0 7 5"><path d="M0,0 L7,0 L3.5,4.5Z" fill="#555"/></svg><svg style="position:absolute;left:0;top:0" width="1024" height="896"><rect x="572" y="483.3" width="452" height="18.7" fill="#a9b5ba"/><rect x="603.5" y="483.3" width="377.5" height="18.7" fill="#aecdd4"/><rect x="608.30" y="491.00" width="1.4" height="11" fill="#2e2e2e"/><rect x="620.51" y="498.50" width="1" height="3.5" fill="#555"/><rect x="632.47" y="496.00" width="1.1" height="6" fill="#3a3a3a"/><rect x="644.54" y="498.50" width="1" height="3.5" fill="#555"/><rect x="656.50" y="496.00" width="1.1" height="6" fill="#3a3a3a"/><rect x="668.56" y="498.50" width="1" height="3.5" fill="#555"/><rect x="680.37" y="491.00" width="1.4" height="11" fill="#2e2e2e"/><rect x="692.58" y="498.50" width="1" height="3.5" fill="#555"/><rect x="704.55" y="496.00" width="1.1" height="6" fill="#3a3a3a"/><rect x="716.61" y="498.50" width="1" height="3.5" fill="#555"/><rect x="728.57" y="496.00" width="1.1" height="6" fill="#3a3a3a"/><rect x="740.63" y="498.50" width="1" height="3.5" fill="#555"/><rect x="752.44" y="491.00" width="1.4" height="11" fill="#2e2e2e"/><rect x="764.66" y="498.50" width="1" height="3.5" fill="#555"/><rect x="776.62" y="496.00" width="1.1" height="6" fill="#3a3a3a"/><rect x="788.68" y="498.50" width="1" height="3.5" fill="#555"/><rect x="800.64" y="496.00" width="1.1" height="6" fill="#3a3a3a"/><rect x="812.70" y="498.50" width="1" height="3.5" fill="#555"/><rect x="824.52" y="491.00" width="1.4" height="11" fill="#2e2e2e"/><rect x="836.73" y="498.50" width="1" height="3.5" fill="#555"/><rect x="848.69" y="496.00" width="1.1" height="6" fill="#3a3a3a"/><rect x="860.75" y="498.50" width="1" height="3.5" fill="#555"/><rect x="872.71" y="496.00" width="1.1" height="6" fill="#3a3a3a"/><rect x="884.78" y="498.50" width="1" height="3.5" fill="#555"/><rect x="896.59" y="491.00" width="1.4" height="11" fill="#2e2e2e"/><rect x="908.80" y="498.50" width="1" height="3.5" fill="#555"/><rect x="920.76" y="496.00" width="1.1" height="6" fill="#3a3a3a"/><rect x="932.82" y="498.50" width="1" height="3.5" fill="#555"/><rect x="944.79" y="496.00" width="1.1" height="6" fill="#3a3a3a"/><rect x="956.85" y="498.50" width="1" height="3.5" fill="#555"/><rect x="968.66" y="491.00" width="1.4" height="11" fill="#2e2e2e"/><rect x="980.87" y="498.50" width="1" height="3.5" fill="#555"/><rect x="992.83" y="496.00" width="1.1" height="6" fill="#3a3a3a"/><rect x="1004.90" y="498.50" width="1" height="3.5" fill="#555"/><rect x="1016.86" y="496.00" width="1.1" height="6" fill="#3a3a3a"/><rect x="980.9" y="483.3" width="1" height="18.7" fill="#7d8a90"/><rect x="572" y="501.7" width="452" height="1.3" fill="#3a3a3a"/><defs><linearGradient id="g1" x1="0" y1="0" x2="0" y2="1"><stop offset="0" stop-color="#7b7b7b"/><stop offset="1" stop-color="#8a8888"/></linearGradient></defs><rect x="572" y="502.7" width="452" height="18.5" fill="url(#g1)"/><rect x="572" y="521.2" width="452" height="17.5" fill="url(#g1)"/><rect x="572" y="538.7" width="452" height="354" fill="#b9b9b9"/><rect x="572" y="553.95" width="452" height="4" fill="#c0c0c0"/><rect x="572" y="555.45" width="452" height="1" fill="#adadad"/><rect x="572" y="570.85" width="452" height="4" fill="#c0c0c0"/><rect x="572" y="572.35" width="452" height="1" fill="#adadad"/><rect x="572" y="587.75" width="452" height="4" fill="#c0c0c0"/><rect x="572" y="589.25" width="452" height="1" fill="#adadad"/><rect x="572" y="604.65" width="452" height="4" fill="#c0c0c0"/><rect x="572" y="606.15" width="452" height="1" fill="#adadad"/><rect x="572" y="621.55" width="452" height="4" fill="#c0c0c0"/><rect x="572" y="623.05" width="452" height="1" fill="#adadad"/><rect x="572" y="638.45" width="452" height="4" fill="#c0c0c0"/><rect x="572" y="639.95" width="452" height="1" fill="#adadad"/><rect x="572" y="655.35" width="452" height="4" fill="#c0c0c0"/><rect x="572" y="656.85" width="452" height="1" fill="#adadad"/><rect x="572" y="672.25" width="452" height="4" fill="#c0c0c0"/><rect x="572" y="673.75" width="452" height="1" fill="#adadad"/><rect x="572" y="689.15" width="452" height="4" fill="#c0c0c0"/><rect x="572" y="690.65" width="452" height="1" fill="#adadad"/><rect x="572" y="706.05" width="452" height="4" fill="#c0c0c0"/><rect x="572" y="707.55" width="452" height="1" fill="#adadad"/><rect x="572" y="722.95" width="452" height="4" fill="#c0c0c0"/><rect x="572" y="724.45" width="452" height="1" fill="#adadad"/><rect x="572" y="739.85" width="452" height="4" fill="#c0c0c0"/><rect x="572" y="741.35" width="452" height="1" fill="#adadad"/><rect x="572" y="756.75" width="452" height="4" fill="#c0c0c0"/><rect x="572" y="758.25" width="452" height="1" fill="#adadad"/><rect x="572" y="773.65" width="452" height="4" fill="#c0c0c0"/><rect x="572" y="775.15" width="452" height="1" fill="#adadad"/><rect x="572" y="790.55" width="452" height="4" fill="#c0c0c0"/><rect x="572" y="792.05" width="452" height="1" fill="#adadad"/><rect x="572" y="807.45" width="452" height="4" fill="#c0c0c0"/><rect x="572" y="808.95" width="452" height="1" fill="#adadad"/><rect x="572" y="824.35" width="452" height="4" fill="#c0c0c0"/><rect x="572" y="825.85" width="452" height="1" fill="#adadad"/><rect x="572" y="841.25" width="452" height="4" fill="#c0c0c0"/><rect x="572" y="842.75" width="452" height="1" fill="#adadad"/><rect x="572" y="858.15" width="452" height="4" fill="#c0c0c0"/><rect x="572" y="859.65" width="452" height="1" fill="#adadad"/><rect x="572" y="875.05" width="452" height="4" fill="#c0c0c0"/><rect x="572" y="876.55" width="452" height="1" fill="#adadad"/><rect x="572" y="891.95" width="452" height="4" fill="#c0c0c0"/><rect x="572" y="893.45" width="452" height="1" fill="#adadad"/><rect x="572" y="908.85" width="452" height="4" fill="#c0c0c0"/><rect x="572" y="910.35" width="452" height="1" fill="#adadad"/><rect x="584.28" y="538.7" width="1" height="354" fill="#b1b1b1"/><rect x="596.29" y="538.7" width="1" height="354" fill="#b1b1b1"/><rect x="608.30" y="538.7" width="1" height="354" fill="#a2a2a2"/><rect x="620.31" y="538.7" width="1" height="354" fill="#b1b1b1"/><rect x="632.32" y="538.7" width="1" height="354" fill="#b1b1b1"/><rect x="644.34" y="538.7" width="1" height="354" fill="#b1b1b1"/><rect x="656.35" y="538.7" width="1" height="354" fill="#b1b1b1"/><rect x="668.36" y="538.7" width="1" height="354" fill="#b1b1b1"/><rect x="680.37" y="538.7" width="1" height="354" fill="#a2a2a2"/><rect x="692.38" y="538.7" width="1" height="354" fill="#b1b1b1"/><rect x="704.40" y="538.7" width="1" height="354" fill="#b1b1b1"/><rect x="716.41" y="538.7" width="1" height="354" fill="#b1b1b1"/><rect x="728.42" y="538.7" width="1" height="354" fill="#b1b1b1"/><rect x="740.43" y="538.7" width="1" height="354" fill="#b1b1b1"/><rect x="752.44" y="538.7" width="1" height="354" fill="#a2a2a2"/><rect x="764.46" y="538.7" width="1" height="354" fill="#b1b1b1"/><rect x="776.47" y="538.7" width="1" height="354" fill="#b1b1b1"/><rect x="788.48" y="538.7" width="1" height="354" fill="#b1b1b1"/><rect x="800.49" y="538.7" width="1" height="354" fill="#b1b1b1"/><rect x="812.50" y="538.7" width="1" height="354" fill="#b1b1b1"/><rect x="824.52" y="538.7" width="1" height="354" fill="#a2a2a2"/><rect x="836.53" y="538.7" width="1" height="354" fill="#b1b1b1"/><rect x="848.54" y="538.7" width="1" height="354" fill="#b1b1b1"/><rect x="860.55" y="538.7" width="1" height="354" fill="#b1b1b1"/><rect x="872.56" y="538.7" width="1" height="354" fill="#b1b1b1"/><rect x="884.58" y="538.7" width="1" height="354" fill="#b1b1b1"/><rect x="896.59" y="538.7" width="1" height="354" fill="#a2a2a2"/><rect x="908.60" y="538.7" width="1" height="354" fill="#b1b1b1"/><rect x="920.61" y="538.7" width="1" height="354" fill="#b1b1b1"/><rect x="932.62" y="538.7" width="1" height="354" fill="#b1b1b1"/><rect x="944.64" y="538.7" width="1" height="354" fill="#b1b1b1"/><rect x="956.65" y="538.7" width="1" height="354" fill="#b1b1b1"/><rect x="968.66" y="538.7" width="1" height="354" fill="#a2a2a2"/><rect x="980.67" y="538.7" width="1" height="354" fill="#b1b1b1"/><rect x="992.68" y="538.7" width="1" height="354" fill="#b1b1b1"/><rect x="1004.70" y="538.7" width="1" height="354" fill="#b1b1b1"/><rect x="1016.71" y="538.7" width="1" height="354" fill="#b1b1b1"/><rect x="632" y="483.3" width="1.4" height="409.7" fill="#f4f4f4"/><path d="M598.39,530.3 L602.79,525.90 L607.19,530.3 L602.79,534.70Z" fill="#7a7a7a" stroke="#262626" stroke-width="1.4" stroke-linejoin="miter"/><path d="M604.40,530.3 L608.8,525.90 L613.20,530.3 L608.8,534.70Z" fill="#7a7a7a" stroke="#262626" stroke-width="1.4" stroke-linejoin="miter"/><path d="M610.41,530.3 L614.81,525.90 L619.21,530.3 L614.81,534.70Z" fill="#7a7a7a" stroke="#262626" stroke-width="1.4" stroke-linejoin="miter"/><path d="M616.41,530.3 L620.81,525.90 L625.21,530.3 L620.81,534.70Z" fill="#7a7a7a" stroke="#262626" stroke-width="1.4" stroke-linejoin="miter"/><path d="M622.42,530.3 L626.82,525.90 L631.22,530.3 L626.82,534.70Z" fill="#7a7a7a" stroke="#262626" stroke-width="1.4" stroke-linejoin="miter"/><path d="M658.45,530.3 L662.85,525.90 L667.25,530.3 L662.85,534.70Z" fill="#7a7a7a" stroke="#262626" stroke-width="1.4" stroke-linejoin="miter"/><path d="M670.47,530.3 L674.87,525.90 L679.27,530.3 L674.87,534.70Z" fill="#7a7a7a" stroke="#262626" stroke-width="1.4" stroke-linejoin="miter"/><path d="M676.47,530.3 L680.87,525.90 L685.27,530.3 L680.87,534.70Z" fill="#7a7a7a" stroke="#262626" stroke-width="1.4" stroke-linejoin="miter"/><path d="M682.48,530.3 L686.88,525.90 L691.28,530.3 L686.88,534.70Z" fill="#7a7a7a" stroke="#262626" stroke-width="1.4" stroke-linejoin="miter"/><path d="M688.48,530.3 L692.88,525.90 L697.28,530.3 L692.88,534.70Z" fill="#7a7a7a" stroke="#262626" stroke-width="1.4" stroke-linejoin="miter"/><path d="M706.50,530.3 L710.9,525.90 L715.30,530.3 L710.9,534.70Z" fill="#7a7a7a" stroke="#262626" stroke-width="1.4" stroke-linejoin="miter"/><path d="M712.51,530.3 L716.91,525.90 L721.31,530.3 L716.91,534.70Z" fill="#7a7a7a" stroke="#262626" stroke-width="1.4" stroke-linejoin="miter"/><path d="M760.56,530.3 L764.96,525.90 L769.36,530.3 L764.96,534.70Z" fill="#7a7a7a" stroke="#262626" stroke-width="1.4" stroke-linejoin="miter"/><path d="M766.56,530.3 L770.96,525.90 L775.36,530.3 L770.96,534.70Z" fill="#7a7a7a" stroke="#262626" stroke-width="1.4" stroke-linejoin="miter"/><path d="M874.67,530.3 L879.07,525.90 L883.47,530.3 L879.07,534.70Z" fill="#7a7a7a" stroke="#262626" stroke-width="1.4" stroke-linejoin="miter"/><path d="M880.68,530.3 L885.08,525.90 L889.48,530.3 L885.08,534.70Z" fill="#7a7a7a" stroke="#262626" stroke-width="1.4" stroke-linejoin="miter"/><path d="M886.68,530.3 L891.08,525.90 L895.48,530.3 L891.08,534.70Z" fill="#7a7a7a" stroke="#262626" stroke-width="1.4" stroke-linejoin="miter"/><path d="M892.69,530.3 L897.09,525.90 L901.49,530.3 L897.09,534.70Z" fill="#7a7a7a" stroke="#262626" stroke-width="1.4" stroke-linejoin="miter"/><path d="M898.69,530.3 L903.09,525.90 L907.49,530.3 L903.09,534.70Z" fill="#7a7a7a" stroke="#262626" stroke-width="1.4" stroke-linejoin="miter"/><path d="M904.70,530.3 L909.1,525.90 L913.50,530.3 L909.1,534.70Z" fill="#7a7a7a" stroke="#262626" stroke-width="1.4" stroke-linejoin="miter"/><path d="M910.71,530.3 L915.11,525.90 L919.51,530.3 L915.11,534.70Z" fill="#7a7a7a" stroke="#262626" stroke-width="1.4" stroke-linejoin="miter"/><path d="M916.71,530.3 L921.11,525.90 L925.51,530.3 L921.11,534.70Z" fill="#7a7a7a" stroke="#262626" stroke-width="1.4" stroke-linejoin="miter"/><path d="M922.72,530.3 L927.12,525.90 L931.52,530.3 L927.12,534.70Z" fill="#7a7a7a" stroke="#262626" stroke-width="1.4" stroke-linejoin="miter"/><path d="M928.72,530.3 L933.12,525.90 L937.52,530.3 L933.12,534.70Z" fill="#7a7a7a" stroke="#262626" stroke-width="1.4" stroke-linejoin="miter"/><path d="M934.73,530.3 L939.13,525.90 L943.53,530.3 L939.13,534.70Z" fill="#7a7a7a" stroke="#262626" stroke-width="1.4" stroke-linejoin="miter"/><path d="M940.74,530.3 L945.14,525.90 L949.54,530.3 L945.14,534.70Z" fill="#7a7a7a" stroke="#262626" stroke-width="1.4" stroke-linejoin="miter"/><path d="M946.74,530.3 L951.14,525.90 L955.54,530.3 L951.14,534.70Z" fill="#7a7a7a" stroke="#262626" stroke-width="1.4" stroke-linejoin="miter"/><path d="M970.77,530.3 L975.17,525.90 L979.57,530.3 L975.17,534.70Z" fill="#7a7a7a" stroke="#262626" stroke-width="1.4" stroke-linejoin="miter"/><path d="M604.40,547.5 L608.8,543.10 L613.20,547.5 L608.8,551.90Z" fill="#a9a9a9" stroke="#2e2e2e" stroke-width="1.4" stroke-linejoin="miter"/><path d="M604.40,564.4 L608.8,560.00 L613.20,564.4 L608.8,568.80Z" fill="#a9a9a9" stroke="#2e2e2e" stroke-width="1.4" stroke-linejoin="miter"/><path d="M604.40,581.3 L608.8,576.90 L613.20,581.3 L608.8,585.70Z" fill="#a9a9a9" stroke="#2e2e2e" stroke-width="1.4" stroke-linejoin="miter"/><path d="M604.40,598.2 L608.8,593.80 L613.20,598.2 L608.8,602.60Z" fill="#a9a9a9" stroke="#2e2e2e" stroke-width="1.4" stroke-linejoin="miter"/><path d="M604.40,615.1 L608.8,610.70 L613.20,615.1 L608.8,619.50Z" fill="#a9a9a9" stroke="#2e2e2e" stroke-width="1.4" stroke-linejoin="miter"/><path d="M604.40,632.0 L608.8,627.60 L613.20,632.0 L608.8,636.40Z" fill="#a9a9a9" stroke="#2e2e2e" stroke-width="1.4" stroke-linejoin="miter"/><path d="M604.40,648.9 L608.8,644.50 L613.20,648.9 L608.8,653.30Z" fill="#a9a9a9" stroke="#2e2e2e" stroke-width="1.4" stroke-linejoin="miter"/><path d="M604.40,665.8 L608.8,661.40 L613.20,665.8 L608.8,670.20Z" fill="#a9a9a9" stroke="#2e2e2e" stroke-width="1.4" stroke-linejoin="miter"/><path d="M604.40,682.7 L608.8,678.30 L613.20,682.7 L608.8,687.10Z" fill="#a9a9a9" stroke="#2e2e2e" stroke-width="1.4" stroke-linejoin="miter"/><path d="M604.40,699.6 L608.8,695.20 L613.20,699.6 L608.8,704.00Z" fill="#a9a9a9" stroke="#2e2e2e" stroke-width="1.4" stroke-linejoin="miter"/><path d="M598.39,716.5 L602.79,712.10 L607.19,716.5 L602.79,720.90Z" fill="#a9a9a9" stroke="#2e2e2e" stroke-width="1.4" stroke-linejoin="miter"/><path d="M604.40,716.5 L608.8,712.10 L613.20,716.5 L608.8,720.90Z" fill="#a9a9a9" stroke="#2e2e2e" stroke-width="1.4" stroke-linejoin="miter"/><path d="M970.77,716.5 L975.17,712.10 L979.57,716.5 L975.17,720.90Z" fill="#a9a9a9" stroke="#2e2e2e" stroke-width="1.4" stroke-linejoin="miter"/><path d="M604.40,733.4 L608.8,729.00 L613.20,733.4 L608.8,737.80Z" fill="#a9a9a9" stroke="#2e2e2e" stroke-width="1.4" stroke-linejoin="miter"/><path d="M604.40,750.3 L608.8,745.90 L613.20,750.3 L608.8,754.70Z" fill="#a9a9a9" stroke="#2e2e2e" stroke-width="1.4" stroke-linejoin="miter"/><path d="M604.40,767.2 L608.8,762.80 L613.20,767.2 L608.8,771.60Z" fill="#a9a9a9" stroke="#2e2e2e" stroke-width="1.4" stroke-linejoin="miter"/><path d="M604.40,784.1 L608.8,779.70 L613.20,784.1 L608.8,788.50Z" fill="#a9a9a9" stroke="#2e2e2e" stroke-width="1.4" stroke-linejoin="miter"/><path d="M604.40,801.0 L608.8,796.60 L613.20,801.0 L608.8,805.40Z" fill="#a9a9a9" stroke="#2e2e2e" stroke-width="1.4" stroke-linejoin="miter"/><path d="M604.40,817.9 L608.8,813.50 L613.20,817.9 L608.8,822.30Z" fill="#a9a9a9" stroke="#2e2e2e" stroke-width="1.4" stroke-linejoin="miter"/><path d="M598.39,834.8 L602.79,830.40 L607.19,834.8 L602.79,839.20Z" fill="#a9a9a9" stroke="#2e2e2e" stroke-width="1.4" stroke-linejoin="miter"/><path d="M604.40,834.8 L608.8,830.40 L613.20,834.8 L608.8,839.20Z" fill="#a9a9a9" stroke="#2e2e2e" stroke-width="1.4" stroke-linejoin="miter"/><path d="M970.77,834.8 L975.17,830.40 L979.57,834.8 L975.17,839.20Z" fill="#a9a9a9" stroke="#2e2e2e" stroke-width="1.4" stroke-linejoin="miter"/><path d="M604.40,851.7 L608.8,847.30 L613.20,851.7 L608.8,856.10Z" fill="#a9a9a9" stroke="#2e2e2e" stroke-width="1.4" stroke-linejoin="miter"/><path d="M604.40,868.6 L608.8,864.20 L613.20,868.6 L608.8,873.00Z" fill="#a9a9a9" stroke="#2e2e2e" stroke-width="1.4" stroke-linejoin="miter"/><path d="M604.40,885.5 L608.8,881.10 L613.20,885.5 L608.8,889.90Z" fill="#a9a9a9" stroke="#2e2e2e" stroke-width="1.4" stroke-linejoin="miter"/><path d="M610.41,885.5 L614.81,881.10 L619.21,885.5 L614.81,889.90Z" fill="#a9a9a9" stroke="#2e2e2e" stroke-width="1.4" stroke-linejoin="miter"/><path d="M616.41,885.5 L620.81,881.10 L625.21,885.5 L620.81,889.90Z" fill="#a9a9a9" stroke="#2e2e2e" stroke-width="1.4" stroke-linejoin="miter"/><path d="M622.42,885.5 L626.82,881.10 L631.22,885.5 L626.82,889.90Z" fill="#a9a9a9" stroke="#2e2e2e" stroke-width="1.4" stroke-linejoin="miter"/><path d="M880.68,885.5 L885.08,881.10 L889.48,885.5 L885.08,889.90Z" fill="#a9a9a9" stroke="#2e2e2e" stroke-width="1.4" stroke-linejoin="miter"/><path d="M886.68,885.5 L891.08,881.10 L895.48,885.5 L891.08,889.90Z" fill="#a9a9a9" stroke="#2e2e2e" stroke-width="1.4" stroke-linejoin="miter"/><path d="M892.69,885.5 L897.09,881.10 L901.49,885.5 L897.09,889.90Z" fill="#a9a9a9" stroke="#2e2e2e" stroke-width="1.4" stroke-linejoin="miter"/><path d="M898.69,885.5 L903.09,881.10 L907.49,885.5 L903.09,889.90Z" fill="#a9a9a9" stroke="#2e2e2e" stroke-width="1.4" stroke-linejoin="miter"/><path d="M904.70,885.5 L909.1,881.10 L913.50,885.5 L909.1,889.90Z" fill="#a9a9a9" stroke="#2e2e2e" stroke-width="1.4" stroke-linejoin="miter"/><path d="M910.71,885.5 L915.11,881.10 L919.51,885.5 L915.11,889.90Z" fill="#a9a9a9" stroke="#2e2e2e" stroke-width="1.4" stroke-linejoin="miter"/></svg><div style="position:absolute;left:611.8px;top:486.73px;font-size:11px;line-height:13px;color:#4c4c4c;font-weight:normal;white-space:nowrap;-webkit-text-stroke:0.2px #4c4c4c;letter-spacing:-0.4px;">0:00</div><div style="position:absolute;left:683.9px;top:486.73px;font-size:11px;line-height:13px;color:#4c4c4c;font-weight:normal;white-space:nowrap;-webkit-text-stroke:0.2px #4c4c4c;letter-spacing:-0.4px;">0:12</div><div style="position:absolute;left:755.9px;top:486.73px;font-size:11px;line-height:13px;color:#4c4c4c;font-weight:normal;white-space:nowrap;-webkit-text-stroke:0.2px #4c4c4c;letter-spacing:-0.4px;">1:00</div><div style="position:absolute;left:828.0px;top:486.73px;font-size:11px;line-height:13px;color:#4c4c4c;font-weight:normal;white-space:nowrap;-webkit-text-stroke:0.2px #4c4c4c;letter-spacing:-0.4px;">1:12</div><div style="position:absolute;left:900.1px;top:486.73px;font-size:11px;line-height:13px;color:#4c4c4c;font-weight:normal;white-space:nowrap;-webkit-text-stroke:0.2px #4c4c4c;letter-spacing:-0.4px;">2:00</div><div style="position:absolute;left:972.2px;top:486.73px;font-size:11px;line-height:13px;color:#4c4c4c;font-weight:normal;white-space:nowrap;-webkit-text-stroke:0.2px #4c4c4c;letter-spacing:-0.4px;">2:12</div><div style="position:absolute;left:981.9px;top:483.3px;width:42.1px;height:17.9px;background:rgba(169,181,186,0.55)"></div>
</body></html>
